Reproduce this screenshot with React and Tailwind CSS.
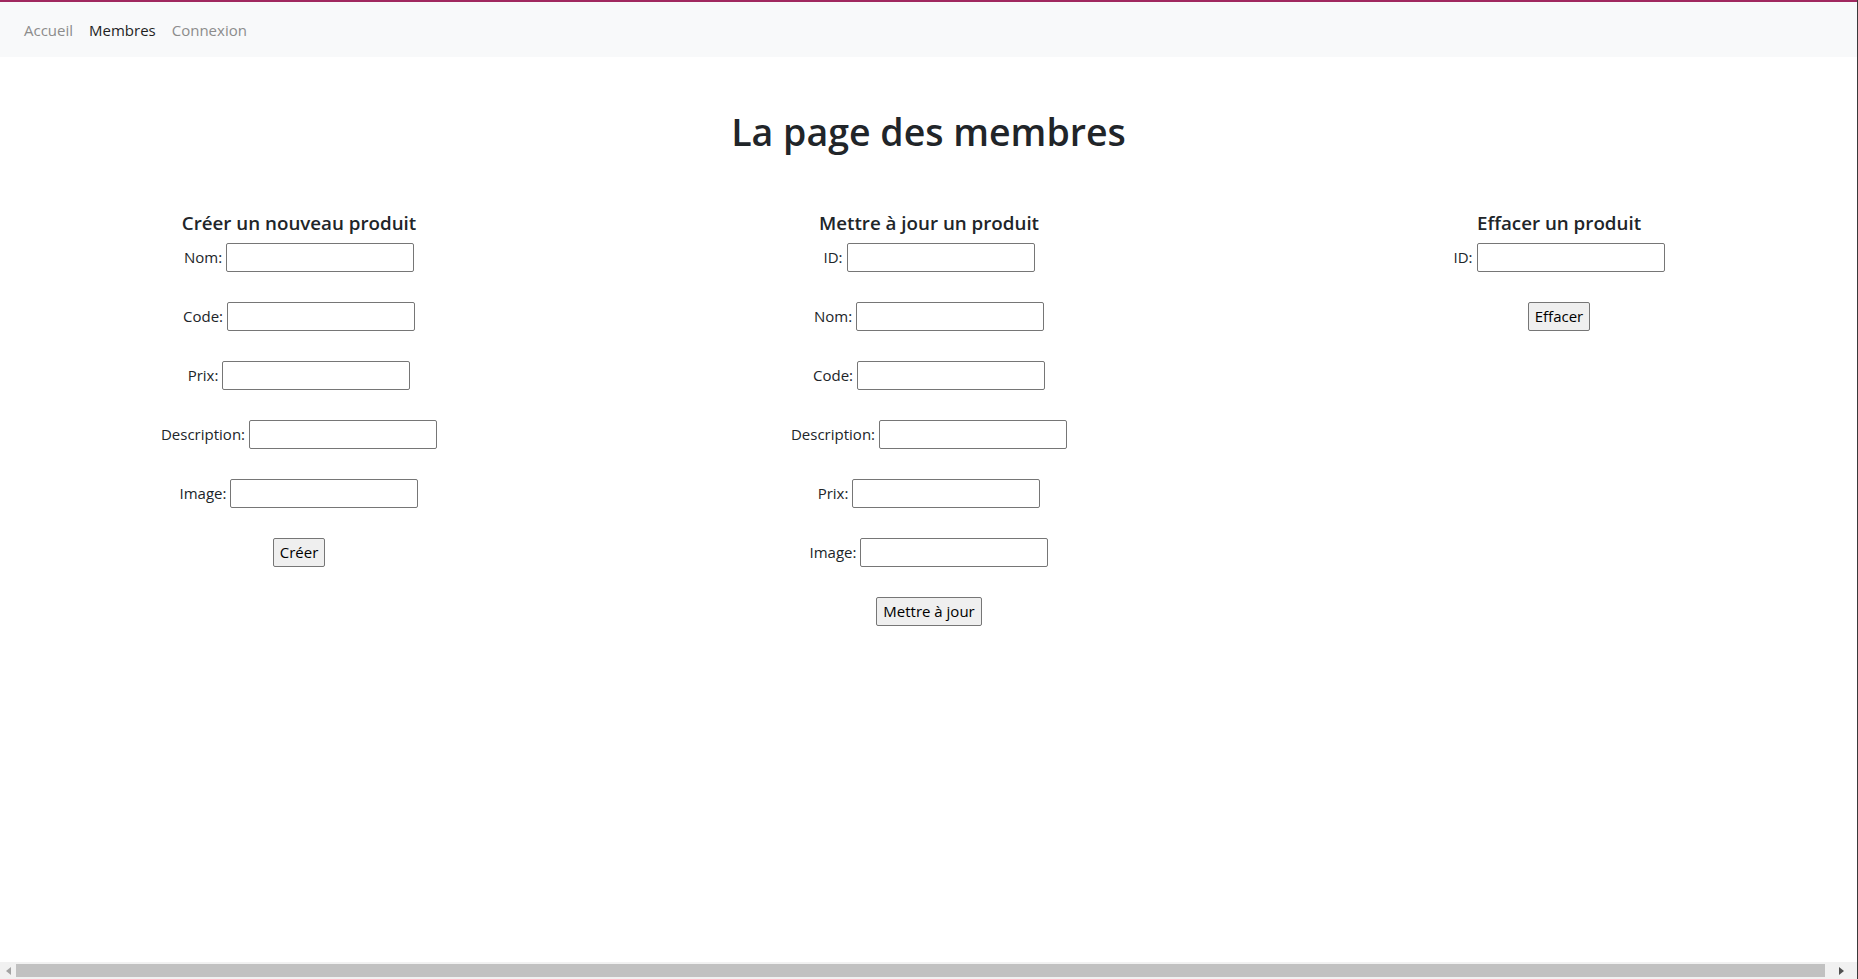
import React from 'react';

const font = { fontFamily: '"Open Sans", "Noto Sans", sans-serif' };

function Field({ label }) {
  return (
    <div className="flex items-center justify-center h-[29px] gap-[4px]">
      <label className="text-[15px] text-[#212529]">{label}</label>
      <input
        type="text"
        className="w-[188px] h-[29px] border border-[#767676] rounded-[2px] bg-white px-[2px] outline-none"
      />
    </div>
  );
}

function ActionButton({ children }) {
  return (
    <div className="flex justify-center">
      <button className="h-[29px] px-[6px] text-[15px] text-black bg-[#efefef] border border-[#767676] rounded-[2px]">
        {children}
      </button>
    </div>
  );
}

function FormColumn({ title, fields, action }) {
  return (
    <section className="flex flex-col items-stretch">
      <h5 className="text-[18.75px] font-semibold leading-[24px] text-[#212529] text-center mb-[8px]">{title}</h5>
      <div className="flex flex-col gap-[30px]">
        {fields.map((f) => (
          <Field key={f} label={f} />
        ))}
        <ActionButton>{action}</ActionButton>
      </div>
    </section>
  );
}

export default function App() {
  return (
    <div style={font} className="h-screen w-full overflow-hidden flex flex-col bg-white border-r border-[#3a3a3a]">
      <nav className="h-[57px] border-t-2 border-[#a0285f] bg-[#f8f9fa] flex items-center pt-[2px] px-[16px]">
        <a className="px-[8px] text-[15px] text-[#8c8c8c]">Accueil</a>
        <a className="px-[8px] text-[15px] text-[#1f1f1f]">Membres</a>
        <a className="px-[8px] text-[15px] text-[#8c8c8c]">Connexion</a>
      </nav>

      <main className="flex-1 overflow-hidden">
        <h1 className="mt-[51px] text-[37.5px] leading-[48px] font-semibold text-[#212529] text-center">
          La page des membres
        </h1>

        <div className="grid grid-cols-3 w-[1890px] -ml-[16px] mt-[55px]">
          <FormColumn
            title="Créer un nouveau produit"
            fields={['Nom:', 'Code:', 'Prix:', 'Description:', 'Image:']}
            action="Créer"
          />
          <FormColumn
            title="Mettre à jour un produit"
            fields={['ID:', 'Nom:', 'Code:', 'Description:', 'Prix:', 'Image:']}
            action="Mettre à jour"
          />
          <FormColumn title="Effacer un produit" fields={['ID:']} action="Effacer" />
        </div>
      </main>

      <div className="h-[17px] bg-[#f1f1f1] flex items-center">
        <div className="w-[16px] flex justify-center">
          <svg width="5" height="8" viewBox="0 0 5 8"><path d="M5 0 L0 4 L5 8 Z" fill="#a3a3a3" /></svg>
        </div>
        <div className="flex-1 h-[13px] bg-[#c1c1c1]" />
        <div className="w-[32px] flex justify-center">
          <svg width="5" height="8" viewBox="0 0 5 8"><path d="M0 0 L5 4 L0 8 Z" fill="#505050" /></svg>
        </div>
      </div>
    </div>
  );
}
